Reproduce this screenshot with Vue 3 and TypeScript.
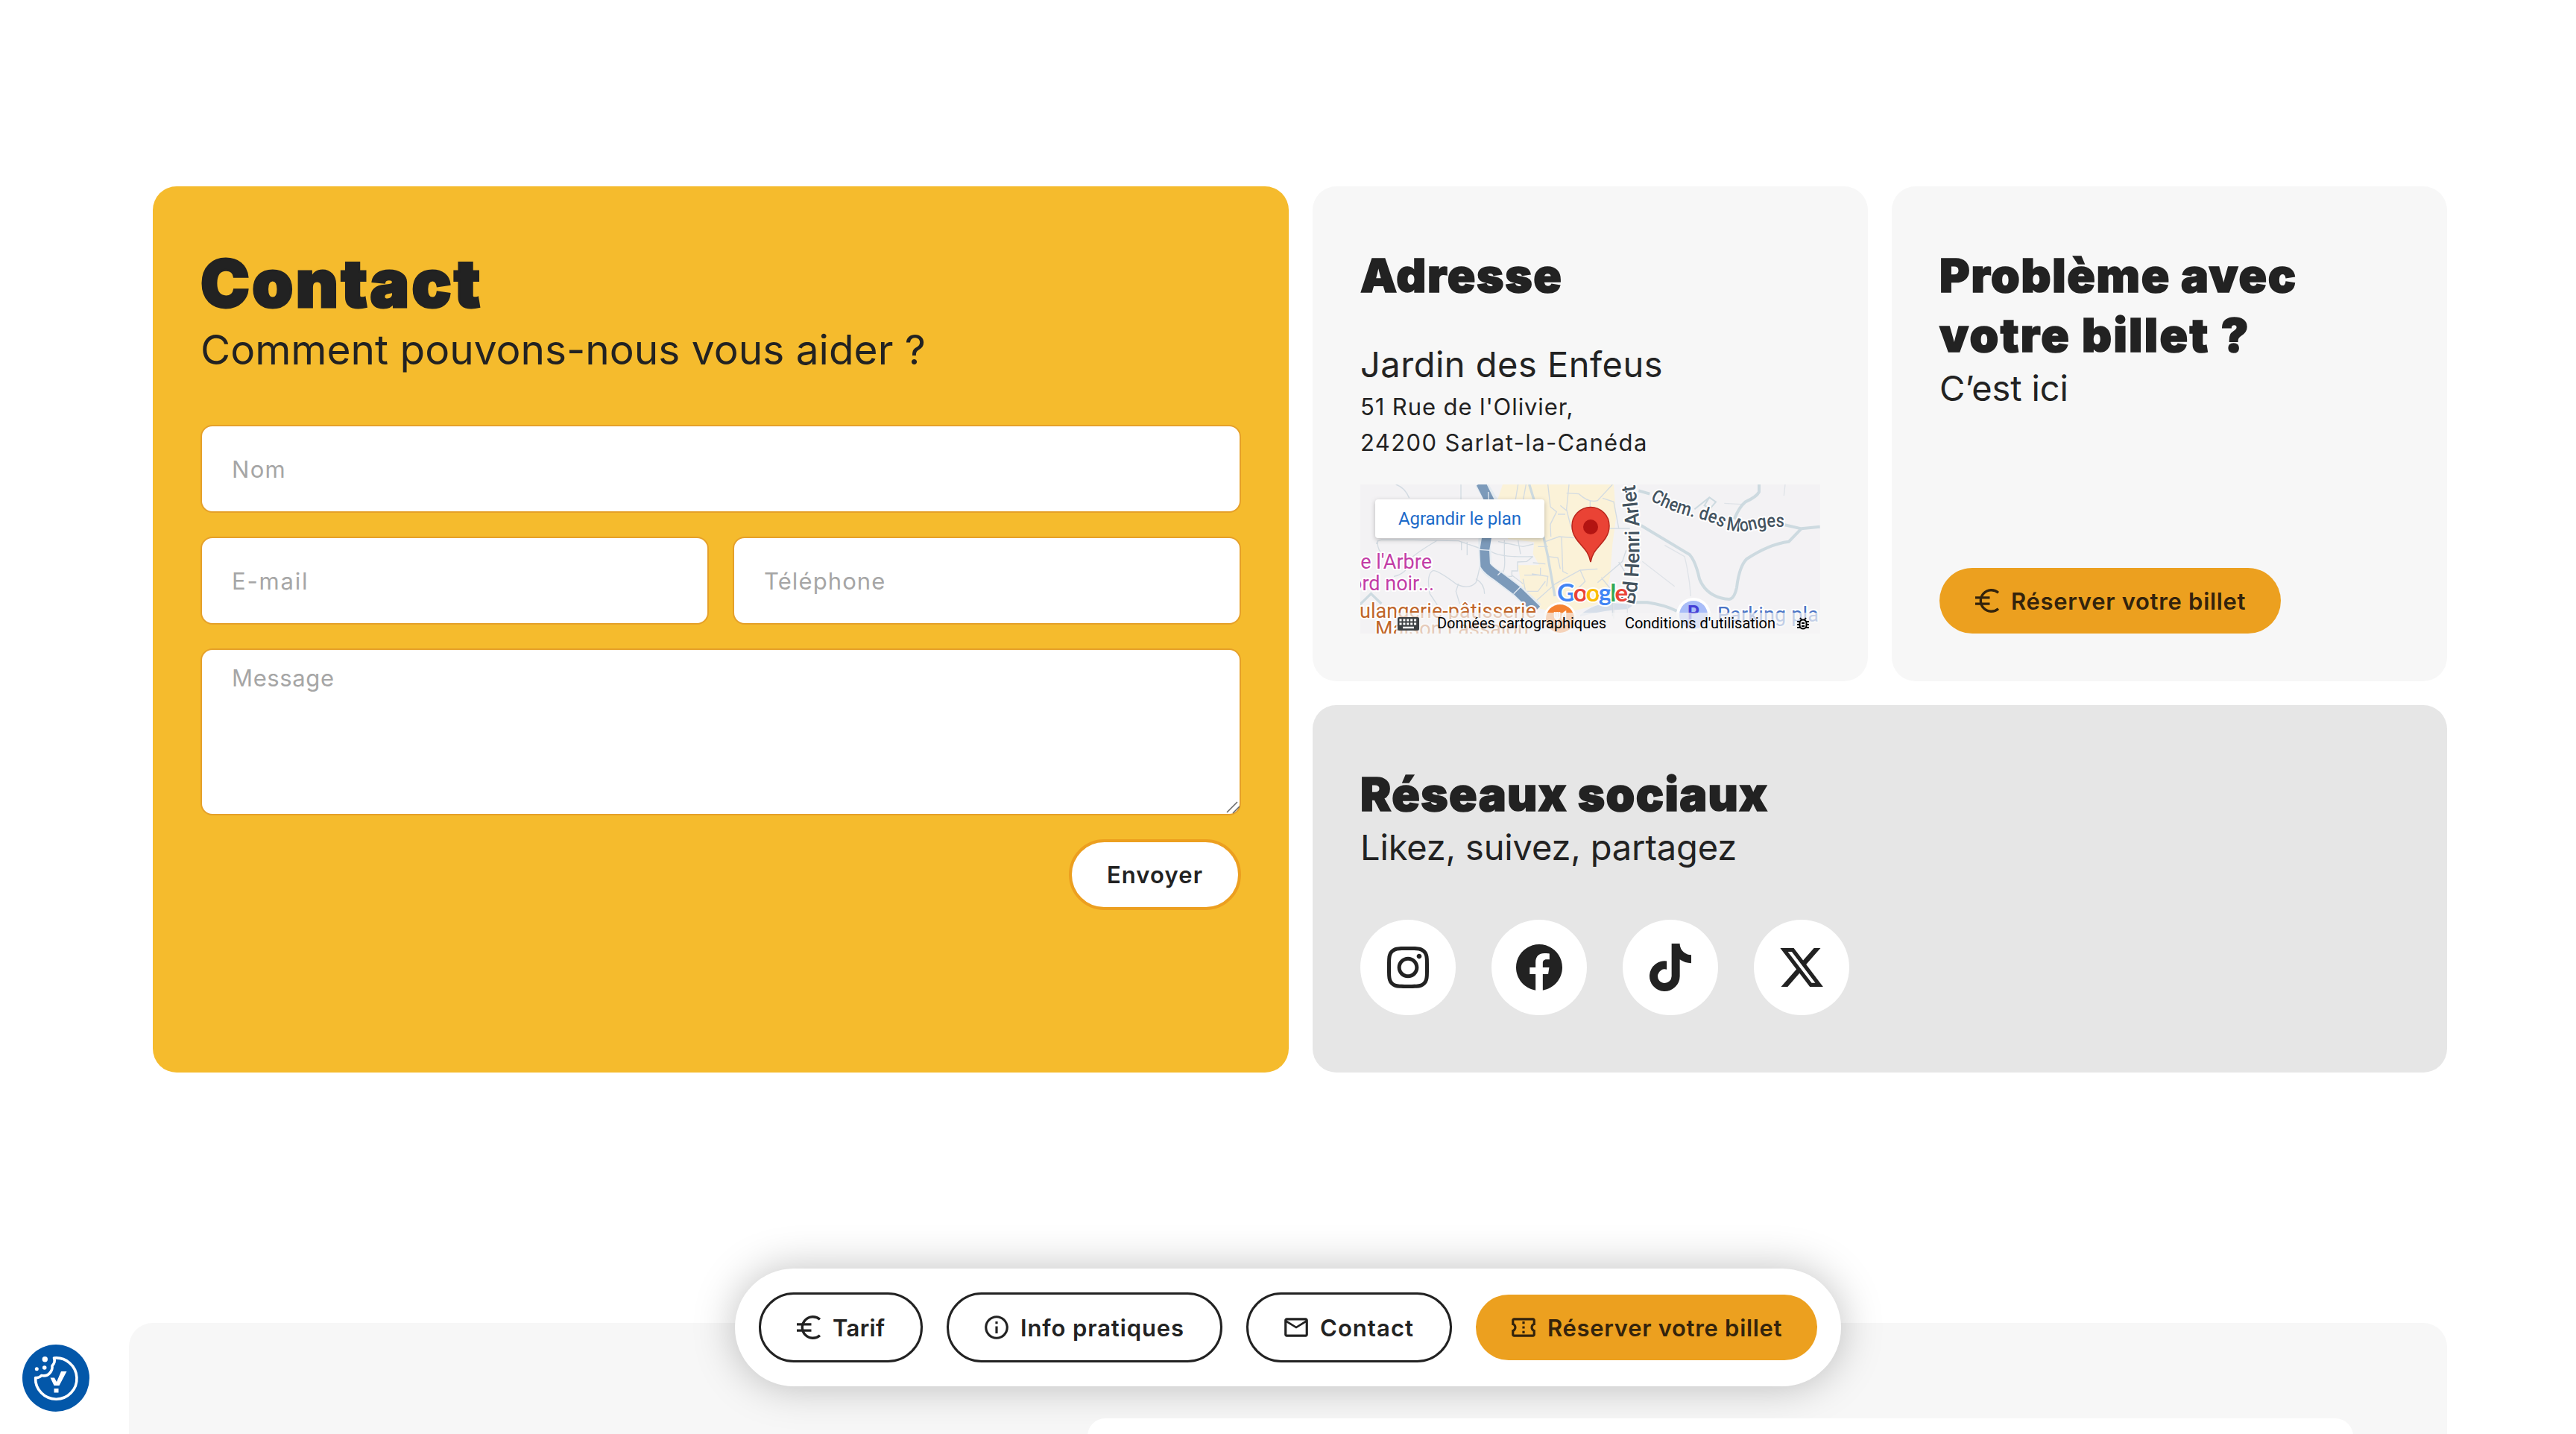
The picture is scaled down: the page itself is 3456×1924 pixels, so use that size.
<script setup lang="ts">
interface Social { name: string; box: string; width: number; path: string }
interface Action { id: string; label: string; icon: string; primary?: boolean }

const icons: Record<string, string> = {
  info: 'M11 7h2v2h-2zm0 4h2v6h-2zm1-9C6.48 2 2 6.48 2 12s4.48 10 10 10 10-4.48 10-10S17.52 2 12 2zm0 18c-4.41 0-8-3.59-8-8s3.59-8 8-8 8 3.59 8 8-3.59 8-8 8z',
  mail: 'M22 6c0-1.1-.9-2-2-2H4c-1.1 0-2 .9-2 2v12c0 1.1.9 2 2 2h16c1.1 0 2-.9 2-2V6zm-2 0-8 5-8-5h16zm0 12H4V8l8 5 8-5v10z',
  ticket: 'M22 10V6c0-1.11-.9-2-2-2H4c-1.1 0-1.99.89-1.99 2v4c1.1 0 1.99.9 1.99 2s-.89 2-2 2v4c0 1.1.9 2 2 2h16c1.1 0 2-.9 2-2v-4c-1.1 0-2-.9-2-2s.9-2 2-2zm-2-1.46c-1.19.69-2 1.99-2 3.46s.81 2.77 2 3.46V18H4v-2.54c1.19-.69 2-1.99 2-3.46 0-1.48-.8-2.77-1.99-3.46L4 6h16v2.54zM11 15h2v2h-2zm0-4h2v2h-2zm0-4h2v2h-2z',
}

const actions: Action[] = [
  { id: 'tarif', label: 'Tarif', icon: 'euro' },
  { id: 'infos', label: 'Info pratiques', icon: 'info' },
  { id: 'contact', label: 'Contact', icon: 'mail' },
  { id: 'reserver', label: 'Réserver votre billet', icon: 'ticket', primary: true },
]

const socials: Social[] = [
  { name: 'Instagram', box: '0 0 448 512', width: 56, path: 'M224.1 141c-63.6 0-114.9 51.3-114.9 114.9s51.3 114.9 114.9 114.9S339 319.5 339 255.9 287.7 141 224.1 141zm0 189.6c-41.1 0-74.7-33.5-74.7-74.7s33.5-74.7 74.7-74.7 74.7 33.5 74.7 74.7-33.6 74.7-74.7 74.7zm146.4-194.3c0 14.9-12 26.8-26.8 26.8-14.9 0-26.8-12-26.8-26.8s12-26.8 26.8-26.8 26.8 12 26.8 26.8zm76.1 27.2c-1.7-35.9-9.9-67.7-36.2-93.9-26.2-26.2-58-34.4-93.9-36.2-37-2.1-147.9-2.1-184.9 0-35.8 1.7-67.6 9.9-93.9 36.1s-34.4 58-36.2 93.9c-2.1 37-2.1 147.9 0 184.9 1.7 35.9 9.9 67.7 36.2 93.9s58 34.4 93.9 36.2c37 2.1 147.9 2.1 184.9 0 35.9-1.7 67.7-9.9 93.9-36.2 26.2-26.2 34.4-58 36.2-93.9 2.1-37 2.1-147.8 0-184.8zM398.8 388c-7.8 19.6-22.9 34.7-42.6 42.6-29.5 11.7-99.5 9-132.1 9s-102.7 2.6-132.1-9c-19.6-7.8-34.7-22.9-42.6-42.6-11.7-29.5-9-99.5-9-132.1s-2.6-102.7 9-132.1c7.8-19.6 22.9-34.7 42.6-42.6 29.5-11.7 99.5-9 132.1-9s102.7-2.6 132.1 9c19.6 7.8 34.7 22.9 42.6 42.6 11.7 29.5 9 99.5 9 132.1s2.7 102.7-9 132.1z' },
  { name: 'Facebook', box: '0 0 512 512', width: 64, path: 'M504 256C504 119 393 8 256 8S8 119 8 256c0 123.78 90.69 226.38 209.25 245V327.69h-63V256h63v-54.64c0-62.15 37-96.48 93.67-96.48 27.14 0 55.52 4.84 55.52 4.84v61h-31.28c-30.8 0-40.41 19.12-40.41 38.73V256h68.78l-11 71.69h-57.78V501C413.31 482.38 504 379.78 504 256z' },
  { name: 'TikTok', box: '0 0 448 512', width: 56, path: 'M448 209.91a210.06 210.06 0 0 1-122.77-39.25V349.38A162.55 162.55 0 1 1 185 188.31V278.2a74.62 74.62 0 1 0 52.23 71.18V0l88 0a121.18 121.18 0 0 0 1.86 22.17A122.18 122.18 0 0 0 381 102.39a121.43 121.43 0 0 0 67 20.14z' },
  { name: 'X', box: '0 0 512 512', width: 64, path: 'M389.2 48h70.6L305.6 224.2 487 464H345L233.7 318.6 106.5 464H35.8L200.7 275.5 26.8 48H172.4L272.9 180.9 389.2 48zM364.4 421.8h39.1L151.1 88h-42L364.4 421.8z' },
]
</script>

<template>
  <div class="page">
    <main class="grid">
      <section class="card contact">
        <h1>Contact</h1>
        <p class="lead">Comment pouvons-nous vous aider ?</p>
        <form class="form" @submit.prevent>
          <input class="field nom" type="text" placeholder="Nom" />
          <div class="row">
            <input class="field email" type="text" placeholder="E-mail" />
            <input class="field tel" type="text" placeholder="Téléphone" />
          </div>
          <div class="area">
            <textarea class="field message" placeholder="Message"></textarea>
            <svg class="grip" viewBox="0 0 18 18"><path d="M1 16 15 2M9 17l9-9" /></svg>
          </div>
          <button class="send" type="submit">Envoyer</button>
        </form>
      </section>

      <section class="card adresse">
        <h2 class="t-adresse">Adresse</h2>
        <p class="place">Jardin des Enfeus</p>
        <address>
          <span class="street">51 Rue de l'Olivier,</span>
          <span class="city">24200 Sarlat-la-Canéda</span>
        </address>
        <svg class="map" viewBox="1.5 0 616 200">
          <defs>
            <path id="henri" d="M368 162Q372 148 373 133Q375 118 375.500 90L375 50Q374 30 369 -3" />
            <path id="monges" d="M390 21Q414 35 445 43T486 58Q506 66 526 61T568 57L590 58" />
          </defs>
          <rect width="620" height="200" fill="#f3f2f4" />
          <g transform="scale(.333333) translate(-42 -60)" fill="none">
            <path fill="#fbf2d8" d="M618 60 598 120 640 280 745 292 740 340 765 385 680 385 690 450 710 510 770 560 860 580 960 555 1060 520 1040 470 1050 430 1060 300 1075 190 1065 60z" />
            <path fill="#d6dee9" d="M930 585Q990 535 1060 538T1140 548L1120 562Q1020 565 930 592z" />
            <g stroke="#d3dbe2" stroke-width="4">
              <path d="M188 60Q225 72 242 115M450 60V120M110 300Q112 285 130 283H260L355 285 440 287 530 318M355 285Q270 335 240 365M115 285Q110 320 140 350M452 290V325M475 292V345M537 330Q520 430 510 455 480 485 430 460 350 400 335 408 310 425 325 500L355 545M510 440Q545 460 545 500M440 460 430 490 445 540M180 430Q215 425 240 390M572 330Q610 355 740 350M625 285V350M625 345Q632 430 600 420M600 290 700 310 742 300M680 285 690 340M740 350 715 370 678 372V408H655V430H610M655 425 700 460M705 425H770V395M790 290 845 270 905 275M760 310H800M740 375 790 380M700 440 710 490 760 490 790 450M740 540 830 460 930 405 1000 400" />
              <path d="M670 120 680 60M700 125 712 60M800 60 810 150 835 170 810 220 812 270M885 60 875 160 890 220 910 270M875 95 925 98Q965 135 1000 125L1060 60M970 125V160M1020 115 1065 130 1085 235M1050 237H1130M850 145 875 165M840 180H870M855 270 860 410 880 420M800 350 840 355 850 400M930 405 950 450 920 480M735 420 800 430 795 470M1000 455 1100 370 1115 325M1085 372 1115 420M1015 435 1060 490V590" />
              <path stroke="#dfe3e8" d="M1180 370 1310 470M1270 305 1350 350Q1370 430 1375 510M1120 540V600M1065 520V600M1510 136 1580 140M1755 60 1750 105" />
            </g>
            <g stroke="#cddae0" stroke-width="13">
              <path stroke-width="10" d="M725 60 765 190 800 350 828 510M42 545 88 500 130 540" />
              <path stroke-width="12" d="M1165 85 1210 98M1650 60V90Q1640 110 1595 130 1570 150 1550 200M1750 222 1820 238 1895 230M1820 238 1770 290Q1690 300 1600 360 1570 390 1560 475 1550 520 1530 522 1440 515 1410 440 1395 370 1370 342L1175 225M1140 535H1200Q1270 545 1320 570" />
              <path stroke-width="6" d="M1390 160 1450 112 1476 130 1455 155 1430 145 1450 112" />
            </g>
            <path stroke="#e4ebf1" stroke-width="50" d="M530 55 575 130 545 285 548 385Q560 410 600 430L680 490 755 560" />
            <path stroke="#7c9aba" stroke-width="38" d="M530 55 565 125 566 200 545 325 548 385Q560 405 600 430L675 487 755 565" />
            <path stroke="#e8eef4" stroke-width="4" d="M522 322 568 325M598 425 618 405M662 500 692 470M560 90 562 120" />
          </g>
          <g class="halo poi">
            <text x="97" y="113" text-anchor="end" fill="#c23da6">e l'Arbre</text>
            <text x="100" y="142" text-anchor="end" fill="#c23da6">ord noir...</text>
            <text x="0" y="179" fill="#c0662a" textLength="237">ulangerie-pâtisserie</text>
            <text x="21" y="203" fill="#c0662a" textLength="206">Maison Lassajou</text>
            <text x="480" y="184" fill="#4a73c4" textLength="136">Parking pla</text>
          </g>
          <g>
            <circle cx="269" cy="180" r="22" fill="#fff" /><circle cx="269" cy="180" r="19" fill="#f58231" />
            <path stroke="#fff" stroke-width="2.500" fill="none" d="M262 171v6q0 3 3 3v9M265 171v8M268 171v6q0 3-3 3M276 189v-18q-4 2-4 9h4" />
            <circle cx="448" cy="175" r="23" fill="#fff" /><circle cx="448" cy="175" r="19" fill="#a9bdf8" />
            <text x="448" y="181" text-anchor="middle" font-size="25" font-weight="700" fill="#443fd6">P</text>
          </g>
          <g class="halo road">
            <text><textPath href="#henri" textLength="163">Bd Henri Arlet</textPath></text>
            <text font-size="25"><textPath href="#monges" textLength="188" lengthAdjust="spacingAndGlyphs">Chem. des Monges</textPath></text>
          </g>
          <path fill="#ea4335" stroke="#b9261c" stroke-width="1.500" d="M310 104C307 88 298 84 290 72 286 66 285 61 285 55.500a25 25 0 0 1 50 0C335 61 334 66 330 72 322 84 313 88 310 104z" />
          <circle cx="310" cy="57" r="10" fill="#b31412" />
          <text class="google halo" x="265" y="157" textLength="95"><tspan fill="#4285f4">G</tspan><tspan fill="#ea4335">o</tspan><tspan fill="#fbbc05">o</tspan><tspan fill="#4285f4">g</tspan><tspan fill="#34a853">l</tspan><tspan fill="#ea4335">e</tspan></text>
          <rect x="49" y="172" width="570" height="28" fill="#f5f5f5" fill-opacity=".7" />
          <g fill="#000" font-size="20">
            <text x="104" y="193" textLength="227">Données cartographiques</text>
            <text x="356" y="193" textLength="202">Conditions d'utilisation</text>
          </g>
          <g transform="translate(51 178)">
            <rect width="29" height="18" rx="2" fill="#3c4043" />
            <path stroke="#fff" stroke-width="3" fill="none" stroke-dasharray="3 1.900" d="M2.500 4H27M2.500 9H27" />
            <path stroke="#fff" stroke-width="2.500" d="M7 14H22" />
          </g>
          <g transform="translate(595 187)" fill="none" stroke="#000" stroke-width="2">
            <rect x="-4.500" y="-5.500" width="9" height="12" rx="4.500" />
            <path d="M-8 -3H-4M4 -3H8M-8 1H-4M4 1H8M-8 5H-4M4 5H8M-4 -8 -2 -5.500M4 -8 2 -5.500M-2 -1H2M-2 3H2" />
          </g>
          <rect class="enlarge" x="21" y="20" width="227" height="52" rx="4" fill="#fff" />
          <text x="52" y="54" font-size="24" fill="#1b6ac9" textLength="165">Agrandir le plan</text>
        </svg>
      </section>

      <section class="card probleme">
        <h2 class="t-probleme">Problème avec<br /><span>votre billet ?</span></h2>
        <p class="sub">C’est ici</p>
        <button class="pill primary" type="button">
          <svg class="icon" viewBox="0 0 38 38"><path class="euro" d="M34 8.200A14.300 14.300 0 1 0 34 29.800M3 14.900H22.500M3 23.100H22.500" /></svg>
          <span class="l-reserver">Réserver votre billet</span>
        </button>
      </section>

      <section class="card sociaux">
        <h2 class="t-sociaux">Réseaux sociaux</h2>
        <p class="sub likez">Likez, suivez, partagez</p>
        <div class="socials">
          <a v-for="s in socials" :key="s.name" class="social" :aria-label="s.name">
            <svg :viewBox="s.box" :width="s.width" height="64"><path :d="s.path" /></svg>
          </a>
        </div>
      </section>
    </main>

    <section class="next"><div class="next-panel"></div></section>

    <nav class="dock">
      <button v-for="a in actions" :key="a.id" type="button" class="pill" :class="[a.primary ? 'primary' : 'outline', 'p-' + a.id]">
        <svg v-if="a.icon === 'euro'" class="icon" viewBox="0 0 38 38"><path class="euro" d="M34 8.200A14.300 14.300 0 1 0 34 29.800M3 14.900H22.500M3 23.100H22.500" /></svg>
        <svg v-else class="icon" viewBox="0 0 24 24"><path :d="icons[a.icon]" /></svg>
        <span :class="'l-' + a.id">{{ a.label }}</span>
      </button>
    </nav>

    <button class="cookie" type="button" aria-label="Cookies">
      <svg viewBox="0 0 90 90">
        <circle cx="45" cy="45" r="45" fill="#0357a9" />
        <path fill="none" stroke="#fff" stroke-width="3.600" stroke-linejoin="round" d="M42.500 18A27.700 27.700 0 1 1 17.600 44.500C21 45 23.500 44 25.500 41.500 30 42.500 34.500 41 37 38 39.500 35 40.500 32 40 28.500 42.500 26 44 22 42.500 18z" />
        <circle cx="30.300" cy="19.700" r="3.700" fill="#fff" /><circle cx="19.300" cy="32.700" r="2.500" fill="#fff" /><circle cx="29.700" cy="31" r="2.800" fill="#fff" />
        <path fill="#fff" d="M37.500 44.500H43L46 50 52 36H59.500L49.500 55H42.500zM42.500 59H48.500V64.500H42.500z" />
      </svg>
    </button>
  </div>
</template>

<style>
body { background: #fff; overflow: hidden; }
</style>

<style scoped>
.page {
  position: relative;
  box-sizing: border-box;
  width: 3456px;
  height: 1924px;
  overflow: hidden;
  padding-top: 250px;
  background: #fff;
  color: #222;
  font-family: Inter, sans-serif;
  display: flex;
  flex-direction: column;
}
h1, h2, p { margin: 0; }
button { font-family: inherit; color: inherit; }
.grid {
  flex: none;
  display: grid;
  grid-template-columns: 1524px 745px 745px;
  grid-template-rows: 664px 493px;
  gap: 32px;
  margin-left: 205px;
}
.card {
  box-sizing: border-box;
  display: flex;
  flex-direction: column;
  padding: 80px 64px 64px;
  border-radius: 32px;
  background: #f7f7f7;
}
.contact { grid-row: span 2; background: #f5bb2d; }
.sociaux { grid-column: span 2; background: #e6e6e6; }

h1 { font-size: 88px; line-height: 100px; font-weight: 900; letter-spacing: 3.5px; -webkit-text-stroke: 3px #222; }
h2 { font-size: 62px; line-height: 80px; font-weight: 900; letter-spacing: 1.7px; -webkit-text-stroke: 1.6px #222; }
.t-probleme span { letter-spacing: 2.4px; }
.t-sociaux { letter-spacing: 1.4px; }
.lead { margin-top: 5px; font-size: 55px; line-height: 68px; }
.place { margin-top: 51px; font-size: 47px; line-height: 56px; letter-spacing: .5px; }
.sub { margin-top: 3px; font-size: 47px; line-height: 56px; letter-spacing: -.15px; }
address {
  display: flex;
  flex-direction: column;
  margin: 5px 0 32px;
  font-style: normal;
  font-size: 31px;
  line-height: 48px;
}
.street { letter-spacing: .9px; }
.city { letter-spacing: 1.38px; }

.form { display: flex; flex-direction: column; gap: 32px; margin-top: 67px; }
.row { display: grid; grid-template-columns: 1fr 1fr; gap: 32px; }
.field {
  box-sizing: border-box;
  display: block;
  width: 100%;
  height: 118px;
  margin: 0;
  padding: 0 40px;
  border: 2px solid #e5a029;
  border-radius: 16px;
  background: #fff;
  font: 400 31px Inter, sans-serif;
  letter-spacing: 1.1px;
  outline: none;
}
.field::placeholder { color: #a6a6a6; opacity: 1; }
.email { letter-spacing: 1.8px; }
.nom { letter-spacing: 1.3px; }
.area { position: relative; }
.message { height: 224px; padding-top: 18px; line-height: 40px; resize: none; letter-spacing: .63px; overflow: hidden; }
.grip { position: absolute; right: 2px; bottom: 2px; width: 18px; height: 18px; fill: none; stroke: #666; stroke-width: 1.5; }
.send {
  align-self: flex-end;
  width: 231px;
  height: 95px;
  padding: 0;
  border: 4px solid #ec9f1f;
  border-radius: 48px;
  background: #fff;
  font-size: 31px;
  font-weight: 600;
  letter-spacing: 1.1px;
}

.map { display: block; width: 617px; height: 200px; font-family: Roboto, sans-serif; }
.halo { paint-order: stroke; stroke: #fff; stroke-width: 4px; stroke-linejoin: round; }
.poi { font-size: 27px; }
.road { font-size: 27px; font-weight: 500; fill: #44535f; }
.google { font: 700 33px Lato, sans-serif; }
.enlarge { filter: drop-shadow(0 2px 3px rgba(0, 0, 0, .25)); }

.pill {
  box-sizing: border-box;
  display: flex;
  align-items: center;
  gap: 13px;
  height: 88px;
  padding: 0 0 0 45px;
  border: 0;
  border-radius: 47px;
  background: #fff;
  font-size: 31px;
  font-weight: 600;
  white-space: nowrap;
}
.outline { height: 94px; border: 3px solid #222; }
.primary { width: 458px; background: #eca01f; color: #33230c; }
.probleme .pill { margin-top: auto; }
.icon { flex: none; width: 38px; height: 38px; fill: currentColor; }
.euro { fill: none; stroke: currentColor; stroke-width: 3.4; }
.l-tarif { letter-spacing: .32px; }
.l-infos { letter-spacing: .89px; }
.l-contact { letter-spacing: 1.06px; }
.l-reserver { letter-spacing: .7px; }

.socials { display: flex; gap: 48px; margin-top: 69px; }
.social {
  display: flex;
  align-items: center;
  justify-content: center;
  width: 128px;
  height: 128px;
  border-radius: 50%;
  background: #fff;
  fill: #222;
}

.next {
  flex: none;
  box-sizing: border-box;
  width: 3110px;
  height: 300px;
  margin: 336px 0 0 173px;
  padding: 128px 126px 0 1286px;
  border-radius: 32px;
  background: #f7f7f7;
}
.next-panel { position: relative; z-index: 2; height: 172px; border-radius: 24px; background: #fff; }

.dock {
  position: absolute;
  z-index: 1;
  left: 986px;
  bottom: 64px;
  box-sizing: border-box;
  display: flex;
  align-items: center;
  gap: 32px;
  height: 158px;
  padding: 0 32px;
  border-radius: 79px;
  background: #fff;
  box-shadow: 0 0 56px rgba(0, 0, 0, .25);
}
.p-tarif { width: 220px; }
.p-infos { width: 370px; }
.p-contact { width: 276px; }
.cookie {
  position: absolute;
  left: 30px;
  bottom: 30px;
  width: 90px;
  height: 90px;
  padding: 0;
  border: 0;
  background: none;
}
.cookie svg { display: block; }
</style>
